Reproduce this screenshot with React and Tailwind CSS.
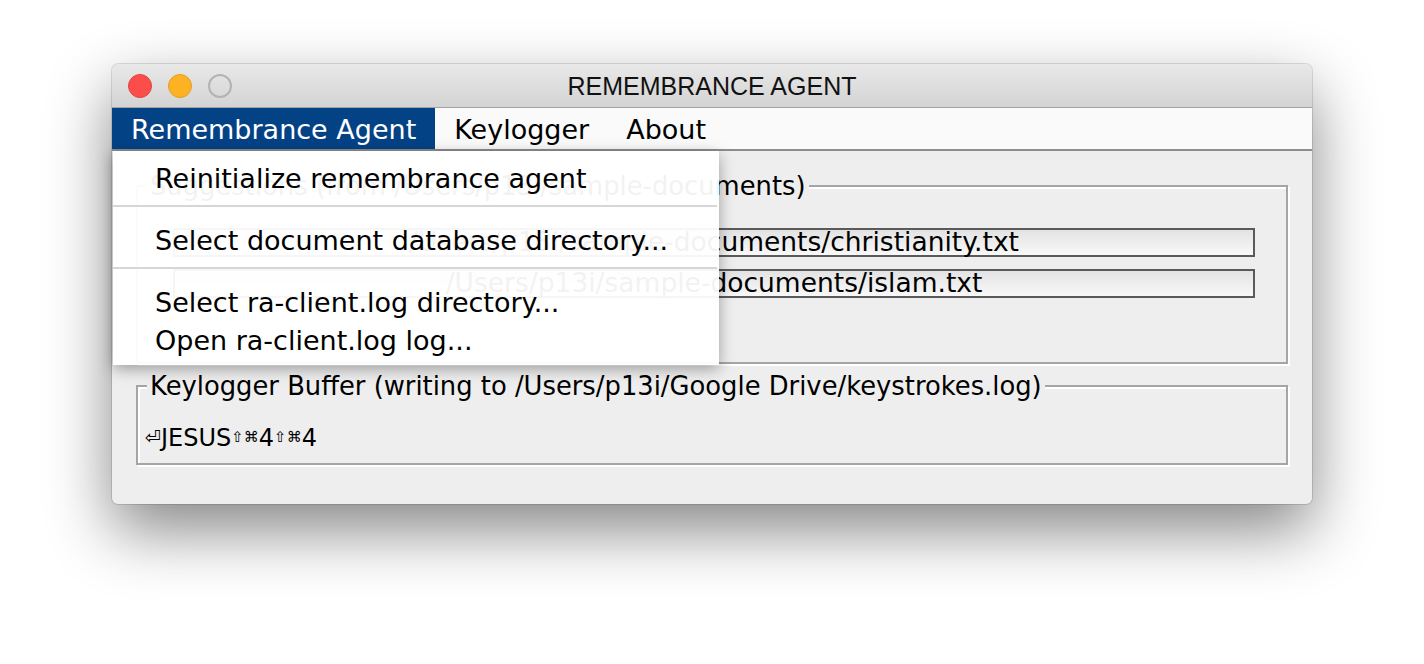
const ui = { fontFamily: "'DejaVu Sans', Verdana, sans-serif" };
const title = { fontFamily: "'Liberation Sans', Arial, sans-serif" };

const menus = ['Remembrance Agent', 'Keylogger', 'About'];

const groups = [
  [{ label: 'Reinitialize remembrance agent' }],
  [{ label: 'Select document database directory...' }],
  [{ label: 'Select ra-client.log directory...' }, { label: 'Open ra-client.log log...' }],
];

const suggestions = [
  '/Users/p13i/sample-documents/christianity.txt',
  '/Users/p13i/sample-documents/islam.txt',
];

function TrafficLights() {
  return (
    <div className="flex items-center gap-[16px] pl-[16px]">
      <span className="w-[24px] h-[24px] rounded-full bg-[#fc4d4a] border border-[#e0443e]" />
      <span className="w-[24px] h-[24px] rounded-full bg-[#fdb224] border border-[#dfa023]" />
      <span className="w-[24px] h-[24px] rounded-full border-2 border-[#b3b3b3]" />
    </div>
  );
}

function Dropdown() {
  return (
    <div
      className="absolute left-[1px] top-[43px] w-[606px] bg-white/[0.95] pt-[9px] pb-[5px] shadow-[0_4px_14px_rgba(0,0,0,0.35)] z-10"
      style={ui}
    >
      {groups.map((g, gi) => (
        <div key={gi}>
          {gi > 0 && (
            <div className="pt-[7px] pb-[15px]">
              <div className="h-[2px] bg-[#d6d6d6] mr-[2px]" />
            </div>
          )}
          {g.map(item => (
            <div key={item.label} className="h-[38px] flex items-center pl-[42px] text-[27px] text-black">
              {item.label}
            </div>
          ))}
        </div>
      ))}
    </div>
  );
}

function Group({ label, children, className = '' }) {
  return (
    <fieldset className={`mx-[24px] border-2 border-[#a5a5a5] shadow-[inset_2px_2px_0_#fff,2px_2px_0_#fff] ${className}`}>
      <legend className="ml-[9px] px-[3px] bg-[#eeeeee] text-[25.8px] leading-[30px] text-black">{label}</legend>
      {children}
    </fieldset>
  );
}

export default function App() {
  return (
    <div className="w-[1424px] h-[664px] bg-white pt-[64px] pl-[112px] overflow-hidden">
      <div className="relative w-[1200px] rounded-t-[7px] rounded-b-[6px] bg-[#eeeeee] shadow-[0_26px_64px_rgba(0,0,0,0.48),0_0_0_1px_rgba(0,0,0,0.12)]">
        {/* title bar */}
        <div className="relative h-[44px] flex items-center rounded-t-[7px] bg-gradient-to-b from-[#e9e9e9] to-[#d3d3d3] border-b border-[#a3a3a3]">
          <TrafficLights />
          <div className="absolute inset-0 pt-[3px] flex items-center justify-center text-[25px] text-[#111]" style={title}>
            REMEMBRANCE AGENT
          </div>
        </div>

        {/* menu bar */}
        <div className="relative h-[43px] flex bg-[#fafafa] border-b-2 border-[#8d8d8d]" style={ui}>
          {menus.map((m, i) => (
            <div
              key={m}
              className={`flex items-center pt-[4px] text-[27px] ${i === 0 ? 'bg-[#044286] text-white pl-[19px] pr-[19px]' : 'text-black pl-[19px] pr-[18px]'}`}
            >
              {m}
            </div>
          ))}
          <Dropdown />
        </div>

        {/* content */}
        <div className="pt-[20px] pb-[39px]" style={ui}>
          <Group label="Suggestions (from /Users/p13i/sample-documents)">
            <div className="pt-[27px] pb-[64px] pl-[35px] pr-[31px] flex flex-col gap-[12px]">
              {suggestions.map(s => (
                <div
                  key={s}
                  className="h-[29px] border-2 border-[#5a5a5a] bg-gradient-to-b from-[#e3e3e3] to-[#f8f8f8] flex items-center justify-center text-[26.5px] leading-none text-black"
                >
                  {s}
                </div>
              ))}
            </div>
          </Group>

          <Group label="Keylogger Buffer (writing to /Users/p13i/Google Drive/keystrokes.log)" className="mt-[7px]">
            <div className="pt-[21px] pb-[10px] pl-[7px] h-[62px] flex items-center text-[24px] text-black">
              <span className="text-[19px]">⏎</span>
              <span>JESUS</span>
              <span className="text-[15px]">⇧⌘</span>
              <span>4</span>
              <span className="text-[15px]">⇧⌘</span>
              <span>4</span>
            </div>
          </Group>
        </div>
      </div>
    </div>
  );
}
